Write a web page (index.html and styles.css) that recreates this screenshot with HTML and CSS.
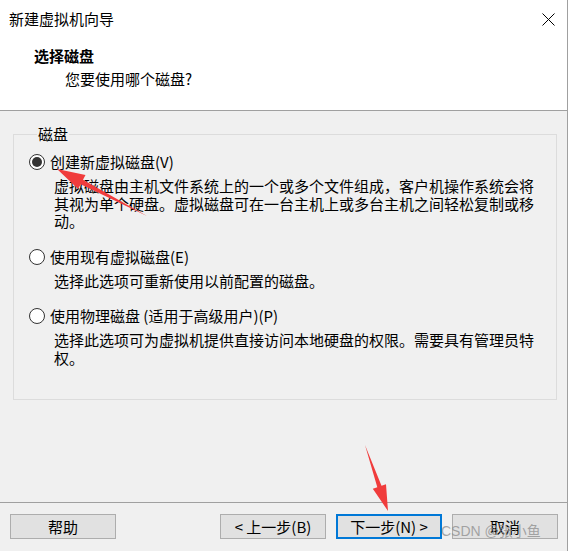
FILE: index.html
```html
<!DOCTYPE html>
<html lang="zh-CN">
<head>
<meta charset="utf-8">
<title>新建虚拟机向导</title>
<link rel="stylesheet" href="styles.css">
</head>
<body>
<div class="window">
  <div class="top">
    <div class="titlebar">
      <span class="title">新建虚拟机向导</span>
      <svg class="close" width="13" height="13" viewBox="0 0 13 13"><path d="M0.5 0.5 L12.5 12.5 M12.5 0.5 L0.5 12.5" stroke="#000" stroke-width="1" fill="none"/></svg>
    </div>
    <div class="header">
      <div class="h-title">选择磁盘</div>
      <div class="h-sub">您要使用哪个磁盘?</div>
    </div>
  </div>
  <div class="main">
    <fieldset class="group">
      <legend>磁盘</legend>
      <div class="option">
        <div class="opt-row"><span class="radio checked"></span><span class="opt-label">创建新虚拟磁盘(V)</span></div>
        <p class="desc">虚拟磁盘由主机文件系统上的一个或多个文件组成，客户机操作系统会将其视为单个硬盘。虚拟磁盘可在一台主机上或多台主机之间轻松复制或移动。</p>
      </div>
      <div class="option">
        <div class="opt-row"><span class="radio"></span><span class="opt-label">使用现有虚拟磁盘(E)</span></div>
        <p class="desc">选择此选项可重新使用以前配置的磁盘。</p>
      </div>
      <div class="option">
        <div class="opt-row"><span class="radio"></span><span class="opt-label">使用物理磁盘 (适用于高级用户)(P)</span></div>
        <p class="desc">选择此选项可为虚拟机提供直接访问本地硬盘的权限。需要具有管理员特权。</p>
      </div>
    </fieldset>
  </div>
  <div class="footer">
    <button class="btn">帮助</button>
    <span class="spacer"></span>
    <div class="btn-group">
      <button class="btn">&lt; 上一步(B)</button>
      <button class="btn default">下一步(N) &gt;</button>
      <button class="btn">取消</button>
    </div>
  </div>
  <div class="watermark">CSDN @张小鱼</div>
  <svg class="arrows" width="570" height="551" viewBox="0 0 570 551">
    <polygon fill="#f03c3c" points="147,216 83,179.8 85.5,174.9 57,169 78.1,189.1 80.6,184.2"/>
    <polygon fill="#f03c3c" points="365,445 377.3,487.2 372.8,488.8 388,511 386,484.2 381.5,485.8"/>
  </svg>
</div>
</body>
</html>
```

FILE: styles.css
```css
html, body {
  margin: 0;
  padding: 0;
}

body {
  background: #ffffff;
  font-family: "Noto Sans CJK SC", "Microsoft YaHei", sans-serif;
  font-size: 15px;
  color: #000;
}

.window {
  position: relative;
  width: 567px;
  height: 551px;
  border-right: 1px solid #a0a0a0;
  background: #f0f0f0;
  display: flex;
  flex-direction: column;
  overflow: hidden;
}

.top {
  background: #ffffff;
  height: 110px;
  border-bottom: 1px solid #a0a0a0;
  flex: none;
}

.titlebar {
  height: 38px;
  display: flex;
  align-items: center;
  justify-content: space-between;
  padding: 0 12px 0 9px;
}

.title {
  line-height: 18px;
}

.close {
  display: block;
}

.header {
  height: 72px;
  box-sizing: border-box;
  padding-top: 9px;
}

.h-title {
  font-weight: 700;
  line-height: 18px;
  padding-left: 34px;
}

.h-sub {
  line-height: 18px;
  margin-top: 5px;
  padding-left: 65px;
}

.main {
  flex: 1;
}

.group {
  box-sizing: border-box;
  width: 544px;
  height: 275px;
  margin: 14px 0 0 13px;
  padding: 10px 0 0 15px;
  border: 1px solid #dcdcdc;
  min-width: 0;
}

.group legend {
  line-height: 18px;
  margin-left: 8px;
  padding: 0 1px;
}

.option + .option {
  margin-top: 18px;
}

.opt-row {
  display: flex;
  align-items: center;
  height: 18px;
  line-height: 18px;
}

.radio {
  position: relative;
  flex: none;
  width: 16px;
  height: 16px;
  box-sizing: border-box;
  border: 1px solid #333;
  border-radius: 50%;
  background: #fff;
  margin-right: 5px;
}

.radio.checked::after {
  content: "";
  position: absolute;
  left: 2px;
  top: 2px;
  width: 10px;
  height: 10px;
  border-radius: 50%;
  background: #333;
}

.desc {
  margin: 6px 0 0 25px;
  width: 485px;
  line-height: 17.5px;
}

.footer {
  flex: none;
  height: 49px;
  box-sizing: border-box;
  border-top: 1px solid #a0a0a0;
  padding: 11px 9px 0 10px;
  display: flex;
  align-items: flex-start;
}

.spacer {
  flex: 1;
}

.btn-group {
  display: flex;
  gap: 10px;
}

.btn {
  width: 106px;
  height: 25px;
  box-sizing: border-box;
  border: 1px solid #adadad;
  background: #e1e1e1;
  font-family: "Noto Sans CJK SC", "Microsoft YaHei", sans-serif;
  font-size: 15px;
  line-height: 21px;
  color: #000;
  padding: 0;
  margin: 0;
  text-align: center;
}

.btn.default {
  border: 2px solid #0078d7;
  line-height: 19px;
}

.watermark {
  position: absolute;
  left: 441px;
  top: 522px;
  font-family: "Liberation Sans", "Noto Sans CJK SC", sans-serif;
  font-size: 14px;
  line-height: 18px;
  color: rgba(140, 140, 140, 0.75);
  pointer-events: none;
}

.arrows {
  position: absolute;
  left: 0;
  top: 0;
  pointer-events: none;
}
```
